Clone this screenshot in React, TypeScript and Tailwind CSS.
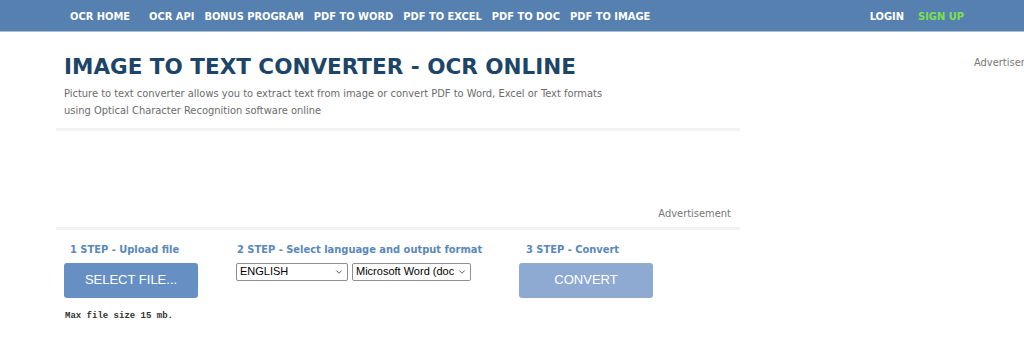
import { ChevronDown } from 'lucide-react'

const navLinks = [
  'OCR HOME',
  'OCR API',
  'BONUS PROGRAM',
  'PDF TO WORD',
  'PDF TO EXCEL',
  'PDF TO DOC',
  'PDF TO IMAGE',
]

function FakeSelect({ value, className }: { value: string; className: string }) {
  return (
    <div
      className={`flex h-[18px] items-center justify-between rounded-[2px] border border-[#8f8f8f] bg-white pl-[3px] pr-[3px] font-['Liberation_Sans',sans-serif] text-[11px] text-black ${className}`}
    >
      <span className="overflow-hidden whitespace-nowrap">{value}</span>
      <ChevronDown className="h-[10px] w-[10px] shrink-0 text-[#444]" strokeWidth={2} />
    </div>
  )
}

export default function App() {
  return (
    <div className="h-[339px] w-[1024px] overflow-hidden bg-white font-['DejaVu_Sans_Condensed','DejaVu_Sans',sans-serif]">
      <nav className="flex h-[32px] items-center border-b border-[#a9bfd7] bg-[#5580b0] pt-[4px] text-[11px] font-bold text-white">
        <ul className="ml-[70px] flex gap-[10px]">
          {navLinks.map((link, i) => (
            <li key={link} className={i === 0 ? 'mr-[9px]' : ''}>
              {link}
            </li>
          ))}
        </ul>
        <div className="ml-auto mr-[60px] flex gap-[14px]">
          <span>LOGIN</span>
          <span className="text-[#7be24a]">SIGN UP</span>
        </div>
      </nav>

      <div className="flex">
        <main className="ml-[56px] w-[684px] shrink-0">
          <div className="px-[8px] pt-[22px]">
            <h1 className="font-['DejaVu_Sans',sans-serif] text-[21.5px] font-bold leading-[26px] text-[#1c4567]">
              IMAGE TO TEXT CONVERTER - OCR ONLINE
            </h1>
            <p className="mt-[5px] text-[11px] leading-[17px] text-[#6b6b6b]">
              Picture to text converter allows you to extract text from image or convert PDF to Word, Excel or Text formats
              <br />
              using Optical Character Recognition software online
            </p>
          </div>
          <div className="mt-[9px] h-[3px] bg-[#f2f2f2]" />

          <div className="flex h-[96px] items-end justify-end pb-[5px] pr-[9px]">
            <span className="text-[11px] text-[#777]">Advertisement</span>
          </div>
          <div className="h-[3px] bg-[#f2f2f2]" />

          <div className="flex pt-[12px]">
            <div className="ml-[8px] w-[172px]">
              <div className="ml-[6px] text-[11px] font-bold text-[#5a88bb]">1 STEP - Upload file</div>
              <button className="mt-[4px] h-[35px] w-[134px] rounded-[3px] bg-[#6690c4] font-['Liberation_Sans',sans-serif] text-[13px] text-white">
                SELECT FILE...
              </button>
              <div className="ml-[1px] mt-[12px] font-['Liberation_Mono',monospace] text-[9px] font-bold text-[#333]">
                Max file size 15 mb.
              </div>
            </div>
            <div className="w-[283px]">
              <div className="ml-[1px] text-[11px] font-bold text-[#5a88bb]">
                2 STEP - Select language and output format
              </div>
              <div className="mt-[4px] flex gap-[4px]">
                <FakeSelect value="ENGLISH" className="w-[112px]" />
                <FakeSelect value="Microsoft Word (doc" className="w-[119px]" />
              </div>
            </div>
            <div>
              <div className="ml-[7px] text-[11px] font-bold text-[#5a88bb]">3 STEP - Convert</div>
              <button className="mt-[4px] h-[35px] w-[134px] rounded-[3px] bg-[#8eaad3] font-['Liberation_Sans',sans-serif] text-[13px] text-white">
                CONVERT
              </button>
            </div>
          </div>
        </main>
        <aside className="ml-[234px] whitespace-nowrap pt-[23px] text-[11px] text-[#777]">Advertisement</aside>
      </div>
    </div>
  )
}
